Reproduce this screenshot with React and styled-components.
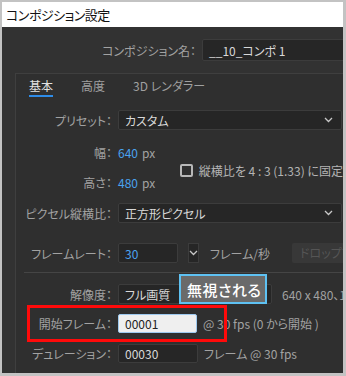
import React from 'react'
import styled, { createGlobalStyle } from 'styled-components'

const Global = createGlobalStyle`
  html, body { margin: 0; padding: 0; background: #c3c3c3; }
  body {
    font-family: "Noto Sans CJK JP", "Noto Sans", sans-serif;
    font-feature-settings: "palt" 1;
  }
`

const Win = styled.div`
  width: 346px;
  height: 376px;
  box-sizing: border-box;
  border: solid #c3c3c3;
  border-width: 2px 3px 3px 2px;
  display: flex;
  flex-direction: column;
  overflow: hidden;
`
const TitleBar = styled.div`
  height: 25px;
  background: #fff;
  color: #111;
  font-size: 13px;
  line-height: 25px;
  padding-left: 4px;
  letter-spacing: -0.5px;
  flex-shrink: 0;
`
const Body = styled.div`
  flex: 1;
  background: #323232;
  position: relative;
  overflow: hidden;
  font-size: 12px;
  color: #a2a2a2;
`
const NameRow = styled.div`
  display: flex;
  align-items: center;
  margin-top: 12px;
  height: 22px;
  padding-left: 100px;
  white-space: nowrap;
`
const NameLabel = styled.span`
  width: 94px;
  text-align: right;
  margin-right: 6px;
`
const Field = styled.div`
  box-sizing: border-box;
  height: ${p => p.h || 20}px;
  width: ${p => p.w}px;
  flex-shrink: 0;
  background: ${p => (p.light ? '#efefef' : '#262626')};
  border: 1px solid ${p => (p.light ? '#9ec9ef' : '#3c3c3c')};
  border-radius: 2px;
  color: ${p => (p.light ? '#222' : p.blue ? '#4aa3f0' : '#d8d8d8')};
  display: flex;
  align-items: center;
  justify-content: space-between;
  padding: 0 8px 0 6px;
  font-size: 12px;
`
const Panel = styled.div`
  margin: 12px 0 0 13px;
  border: 1px solid #3f3f3f;
  border-right: none;
  border-bottom: none;
  background: #2f2f2f;
  height: 320px;
  position: relative;
`
const Tabs = styled.div`
  display: flex;
  gap: 28px;
  padding: 3px 0 0 13px;
  height: 20px;
`
const Tab = styled.div`
  color: ${p => (p.active ? '#e2e2e2' : '#a0a0a0')};
  font-size: 12px;
  line-height: 17px;
  height: 20px;
  box-sizing: border-box;
  border-bottom: 2px solid ${p => (p.active ? '#2e8ce8' : 'transparent')};
`
const Row = styled.div`
  display: flex;
  align-items: center;
  height: ${p => p.h || 20}px;
  margin-top: ${p => p.mt || 0}px;
  white-space: nowrap;
`
const Label = styled.span`
  width: 96px;
  text-align: right;
  margin-right: 6px;
  flex-shrink: 0;
`
const Value = styled.span`
  color: #4aa3f0;
  margin-right: 4px;
`
const Unit = styled.span`
  color: #a2a2a2;
  margin-left: ${p => p.ml || 0}px;
`
const SizeGroup = styled.div`
  display: flex;
  align-items: center;
  margin-top: 12px;
`
const SizeCol = styled.div`
  display: flex;
  flex-direction: column;
  gap: 10px;
  width: 170px;
`
const Lock = styled.label`
  display: flex;
  align-items: center;
  gap: 6px;
  margin-top: 6px;
  color: #b4b4b4;
  white-space: nowrap;
`
const Box = styled.span`
  width: 9px;
  height: 9px;
  border: 2px solid #b8b8b8;
  border-radius: 2px;
`
const SmallBtn = styled.div`
  box-sizing: border-box;
  width: 19px;
  height: 20px;
  margin-left: 10px;
  border: 1px solid #3c3c3c;
  background: #262626;
  display: flex;
  align-items: center;
  justify-content: center;
`
const Disabled = styled.div`
  margin-left: 22px;
  height: 20px;
  padding: 0 8px;
  background: #383838;
  color: #555;
  line-height: 20px;
  border-radius: 2px;
`
const Sep = styled.div`
  height: 1px;
  background: #454545;
  margin: 9px 0 0 8px;
`
const Mark = styled.div`
  position: absolute;
  left: ${p => p.x}px;
  top: ${p => p.y}px;
  width: ${p => p.w}px;
  height: ${p => p.h}px;
  box-sizing: border-box;
`
const RedBox = styled(Mark)`
  border: 3px solid #ff0a0a;
`
const Tip = styled(Mark)`
  border: 2px solid #5ec1f2;
  background: #6a6a6a;
  color: #fff;
  font-size: 15px;
  font-weight: 500;
  display: flex;
  align-items: center;
  padding-left: 6px;
  letter-spacing: 0.5px;
`

const Chevron = ({ c = '#c8c8c8' }) => (
  <svg width="9" height="6" viewBox="0 0 9 6">
    <path d="M1 1l3.5 3.5L8 1" fill="none" stroke={c} strokeWidth="1.3" />
  </svg>
)

export default function App() {
  return (
    <>
      <Global />
      <Win>
        <TitleBar>コンポジション設定</TitleBar>
        <Body>
          <NameRow>
            <NameLabel>コンポジション名：</NameLabel>
            <Field w={160} h={22}>__10_コンポ 1</Field>
          </NameRow>
          <Panel>
            <Tabs>
              <Tab active>基本</Tab>
              <Tab>高度</Tab>
              <Tab>3D レンダラー</Tab>
            </Tabs>
            <Row mt={13}>
              <Label>プリセット：</Label>
              <Field w={224}>カスタム<Chevron /></Field>
            </Row>
            <SizeGroup>
              <SizeCol>
                <Row>
                  <Label>幅：</Label>
                  <Value>640</Value><Unit>px</Unit>
                </Row>
                <Row>
                  <Label>高さ：</Label>
                  <Value>480</Value><Unit>px</Unit>
                </Row>
              </SizeCol>
              <Lock><Box />縦横比を 4 : 3 (1.33) に固定</Lock>
            </SizeGroup>
            <Row mt={11}>
              <Label>ピクセル縦横比：</Label>
              <Field w={224}>正方形ピクセル<Chevron /></Field>
            </Row>
            <Row mt={20}>
              <Label>フレームレート：</Label>
              <Field w={60} blue>30</Field>
              <SmallBtn><Chevron /></SmallBtn>
              <Unit ml={11}>フレーム/秒</Unit>
              <Disabled>ドロップフレーム</Disabled>
            </Row>
            <Sep />
            <Row mt={11}>
              <Label>解像度：</Label>
              <Field w={154}>フル画質<Chevron /></Field>
              <Unit ml={10}>640 x 480、1.2 MB</Unit>
            </Row>
            <Row mt={10} h={19}>
              <Label>開始フレーム：</Label>
              <Field w={79} h={19} light>00001</Field>
              <Unit ml={6}>@ 30 fps (0 から開始 )</Unit>
            </Row>
            <Row mt={11} h={19}>
              <Label>デュレーション：</Label>
              <Field w={80} h={19}>00030</Field>
              <Unit ml={6}>フレーム @ 30 fps</Unit>
            </Row>
            <RedBox x={11} y={231} w={200} h={37} />
            <Tip x={163} y={200} w={88} h={30}>無視される</Tip>
          </Panel>
        </Body>
      </Win>
    </>
  )
}
